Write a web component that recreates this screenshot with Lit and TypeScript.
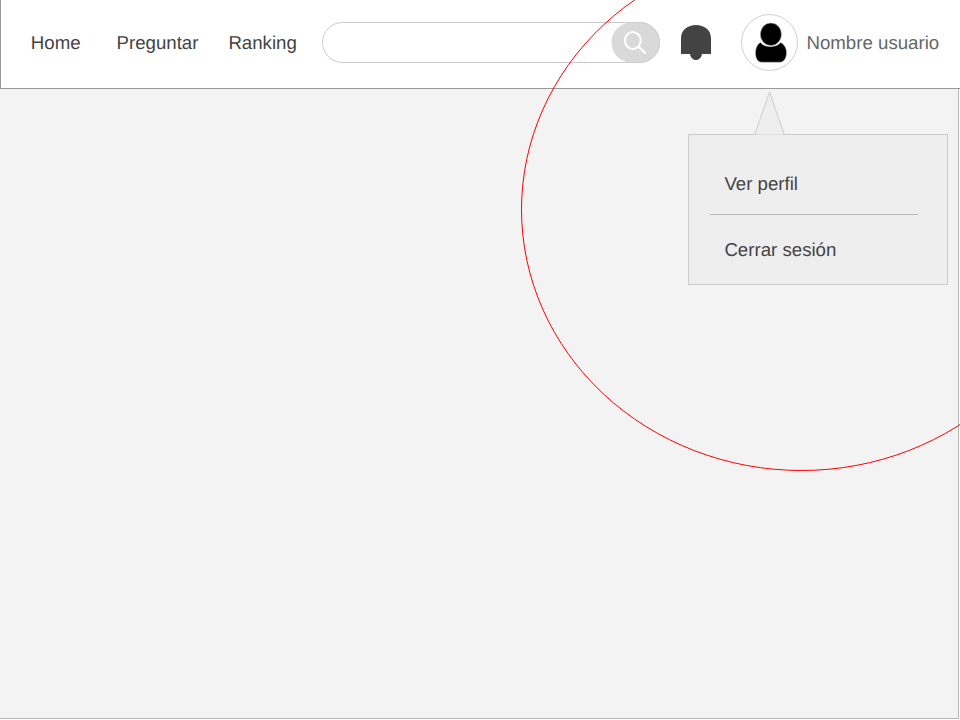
import { LitElement, html, css } from "lit";
import { customElement } from "lit/decorators.js";

@customElement("user-menu")
class UserMenu extends LitElement {
  static styles = css`
    :host {
      display: block;
      position: absolute;
      left: 688px;
      top: 90px;
      width: 260px;
    }
    .pointer {
      display: block;
      position: relative;
      width: 32px;
      height: 45px;
      margin-left: 65px;
    }
    .panel {
      box-sizing: border-box;
      height: 151px;
      margin-top: -1px;
      padding: 37px 29px 0 21.4px;
      background: #eee;
      border: 1px solid #ccc;
    }
    .item {
      padding-left: 14px;
      line-height: 24px;
      color: #434343;
      transform: translateY(-0.5px);
    }
    .line {
      height: 1px;
      margin: 18px 0 23px;
      background: #b7b7b7;
    }
  `;
  render() {
    return html`
      <svg class="pointer" viewBox="0 0 32 45">
        <path d="M1.5 45 L16.5 2 L31.5 45 Z" fill="#eee" stroke="#ccc" />
      </svg>
      <div class="panel">
        <div class="item">Ver perfil</div>
        <div class="line"></div>
        <div class="item">Cerrar sesión</div>
      </div>
    `;
  }
}

@customElement("app-root")
class AppRoot extends LitElement {
  static styles = css`
    :host {
      display: block;
      position: relative;
      width: 960px;
      height: 720px;
      overflow: hidden;
      background: #fff;
      font-family: "Liberation Sans", Arial, sans-serif;
      font-size: 18.667px;
      text-rendering: geometricPrecision;
      color: #434343;
    }
    .header {
      box-sizing: border-box;
      display: flex;
      height: 89px;
      padding-left: 29.8px;
      border-left: 1px solid #999;
      border-bottom: 1px solid #999;
      white-space: nowrap;
    }
    .nav {
      display: flex;
      width: 291.2px;
      padding-top: 31px;
      line-height: 24px;
      transform: translateY(-0.5px);
    }
    .home { width: 85.7px; }
    .ask { width: 111.9px; }
    .search {
      box-sizing: border-box;
      display: flex;
      justify-content: flex-end;
      width: 338px;
      height: 41px;
      margin-top: 22px;
      border: 1px solid #ccc;
      border-radius: 21px;
    }
    .search-button {
      display: block;
      width: 49px;
      height: 41px;
      margin: -1px -1px 0 0;
    }
    .bell {
      width: 30px;
      height: 35px;
      margin: 25px 0 0 21px;
    }
    .avatar {
      width: 58px;
      height: 58px;
      margin: 13px 0 0 30px;
    }
    .name {
      padding: 31px 0 0 7.5px;
      line-height: 24px;
      color: #666;
      transform: translateY(-0.5px);
    }
    .content {
      box-sizing: border-box;
      width: 959px;
      height: 630px;
      background: #f3f3f3;
      border-right: 1px solid #b7b7b7;
      border-bottom: 1px solid #b7b7b7;
    }
    .highlight {
      position: absolute;
      left: 0;
      top: 0;
      width: 960px;
      height: 720px;
      pointer-events: none;
    }
  `;
  render() {
    return html`
      <div class="header">
        <div class="nav">
          <div class="home">Home</div>
          <div class="ask">Preguntar</div>
          <div>Ranking</div>
        </div>
        <div class="search">
          <svg class="search-button" viewBox="0 0 49 41">
            <rect x=".5" y=".5" width="48" height="40" rx="20" fill="#d9d9d9" />
            <path d="M21 .5 H28.5 A20 20 0 0 1 28.5 40.5 H21" fill="none" stroke="#ccc" />
            <ellipse cx="21.8" cy="18.5" rx="7.9" ry="8.5" fill="none" stroke="#fff" stroke-width="2" />
            <path d="M27.5 24.5 L34.6 31.5" stroke="#fff" stroke-width="2.3" />
          </svg>
        </div>
        <svg class="bell" viewBox="0 0 30 35">
          <path d="M0 29 V13 C0 5 7 0 15 0 C23 0 30 5 30 13 V29 H21 C20.5 32.5 18 35 15 35 C12 35 9.5 32.5 9 29 Z" fill="#434343" />
        </svg>
        <svg class="avatar" viewBox="0 0 58 58">
          <circle cx="28.5" cy="29.5" r="28" fill="#fff" stroke="#d0d0d0" />
          <path d="M19.5 29.5 C23 35 36 35 39.5 29.5 C43 31 45.5 35 45.5 39.5 C45.5 45 43 49.2 39 49.2 H20.5 C16.5 49.2 14.5 45 14.5 40 C14.5 35 16.5 31 19.5 29.5 Z" fill="#000" stroke="#bbb" stroke-width=".5" />
          <ellipse cx="29.9" cy="21.3" rx="10.5" ry="11.3" fill="#000" stroke="#bbb" stroke-width=".5" />
        </svg>
        <div class="name">Nombre usuario</div>
      </div>
      <div class="content"></div>
      <user-menu></user-menu>
      <svg class="highlight" viewBox="0 0 960 720">
        <ellipse cx="801.5" cy="209.5" rx="280" ry="261" fill="none" stroke="#f00" />
      </svg>
    `;
  }
}
